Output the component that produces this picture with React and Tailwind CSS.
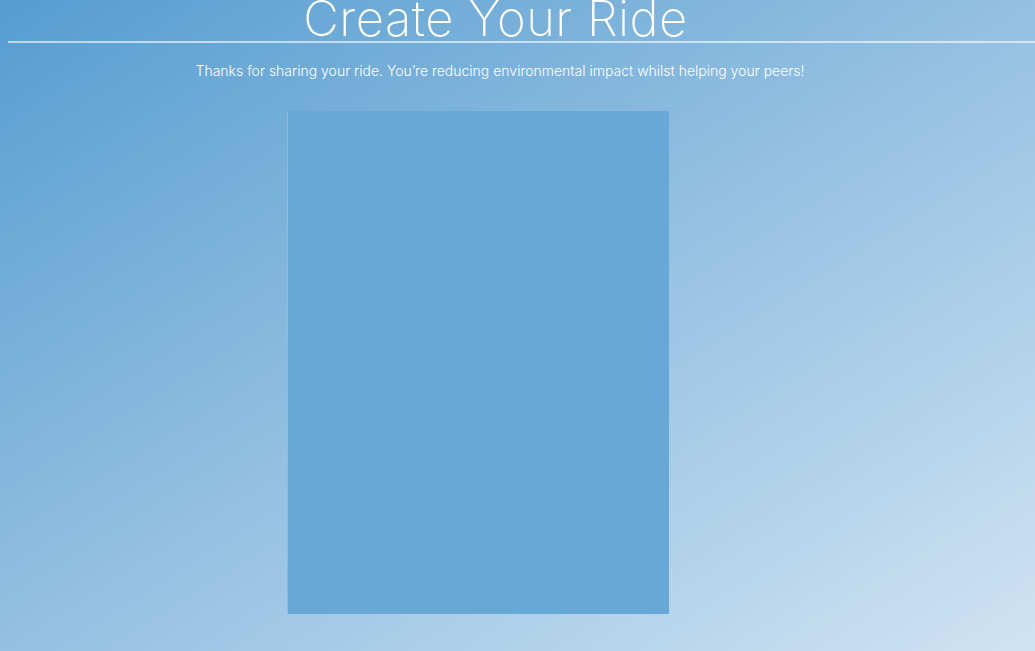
import React from "react";

function App() {
  return (
    <div className="w-[1035px] h-[651px] overflow-hidden bg-gradient-to-br from-[#559dd0] to-[#d0e3f2] font-['Inter',sans-serif] text-white">
      {/* Header */}
      <div className="pl-2">
        <h1 className="w-[975px] text-center text-[49px] font-extralight leading-none -mt-[6px] tracking-[0.5px]">
          Create Your Ride
        </h1>
        <div className="h-[2px] w-full bg-white/60 -mt-[2px]"></div>
      </div>

      <p className="w-[1000px] text-center text-[14px] font-light mt-[17px]">
        Thanks for sharing your ride. You&rsquo;re reducing environmental impact whilst helping your peers!
      </p>

      {/* Ride card */}
      <div className="ml-[287px] mt-[30px] w-[382px] h-[503px] bg-[#68a8d6] border-l border-[#8cbde0]"></div>
    </div>
  );
}

export default App;
